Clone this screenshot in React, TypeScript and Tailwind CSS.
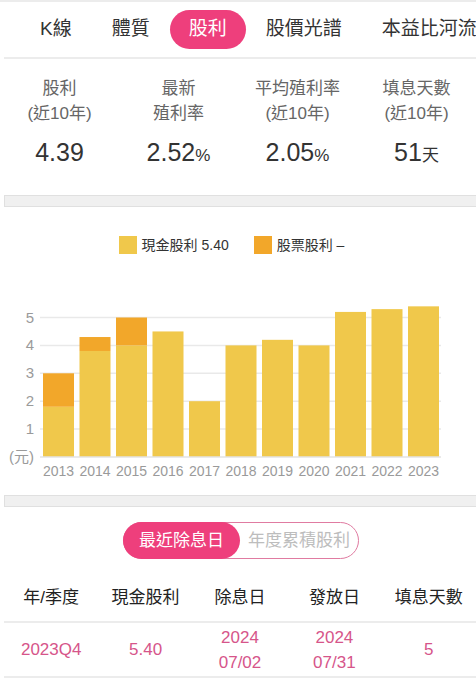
import React from 'react';

const FONT = '"Liberation Sans", "Noto Sans CJK TC", sans-serif';

const tabs = ['K線', '體質', '股利', '股價光譜', '本益比河流'];

const stats = [
    { l1: '股利', l2: '(近10年)', v: '4.39', u: '' },
    { l1: '最新', l2: '殖利率', v: '2.52', u: '%' },
    { l1: '平均殖利率', l2: '(近10年)', v: '2.05', u: '%' },
    { l1: '填息天數', l2: '(近10年)', v: '51', u: '天' },
];

const bars = [
    { year: '2013', cash: 1.8, stock: 1.2 },
    { year: '2014', cash: 3.8, stock: 0.5 },
    { year: '2015', cash: 4.0, stock: 1.0 },
    { year: '2016', cash: 4.5, stock: 0 },
    { year: '2017', cash: 2.0, stock: 0 },
    { year: '2018', cash: 4.0, stock: 0 },
    { year: '2019', cash: 4.2, stock: 0 },
    { year: '2020', cash: 4.0, stock: 0 },
    { year: '2021', cash: 5.2, stock: 0 },
    { year: '2022', cash: 5.3, stock: 0 },
    { year: '2023', cash: 5.4, stock: 0 },
];

const BASE = 457;
const UNIT = 27.9;

function Band() {
    return <div className="ml-[4px] h-[12px] bg-[#f0f0f0] border border-r-0 border-[#e0e0e0]" />;
}

function Chart() {
    return (
        <svg width={476} height={241} viewBox="0 254 476 241" className="block">
            {[1, 2, 3, 4, 5].map((v) => (
                <g key={v}>
                    <line x1={40} x2={441} y1={BASE - v * UNIT} y2={BASE - v * UNIT} stroke="#e9e9e9" strokeWidth={1.5} />
                    <text x={34} y={BASE - v * UNIT + 5} textAnchor="end" fontSize={15} fill="#9a9a9a" fontFamily={FONT}>{v}</text>
                </g>
            ))}
            <text x={34} y={BASE + 5} textAnchor="end" fontSize={15} fill="#9a9a9a" fontFamily={FONT}>(元)</text>
            {bars.map((b, i) => {
                const x = 43 + i * 36.5;
                const cashTop = BASE - b.cash * UNIT;
                const stockTop = cashTop - b.stock * UNIT;
                return (
                    <g key={b.year}>
                        <rect x={x} y={cashTop} width={31} height={b.cash * UNIT} fill="#f0c84b" />
                        {b.stock > 0 && <rect x={x} y={stockTop} width={31} height={b.stock * UNIT} fill="#f2a72a" />}
                        <text x={x + 15.5} y={BASE + 19} textAnchor="middle" fontSize={14} fill="#9a9a9a" fontFamily={FONT}>{b.year}</text>
                    </g>
                );
            })}
            <line x1={40} x2={441} y1={BASE} y2={BASE} stroke="#e3e3e3" strokeWidth={1.5} />
        </svg>
    );
}

export default function App() {
    return (
        <div className="w-[476px] h-[679px] overflow-hidden bg-white" style={{ fontFamily: FONT }}>
            <div className="border-t-2 border-[#ececec]" />

            {/* Tabs */}
            <div className="h-[55px] flex items-center pl-[40px] whitespace-nowrap text-[19px] text-[#333]">
                {tabs.map((t) => (
                    <div
                        key={t}
                        className={t === '股利'
                            ? 'h-[39px] px-[19px] rounded-full bg-[#ee3f7c] text-white flex items-center'
                            : 'h-[39px] px-[20px] first:pl-0 flex items-center'}
                    >
                        {t}
                    </div>
                ))}
            </div>
            <div className="ml-[4px] border-t-2 border-[#ececec]" />

            {/* Stats */}
            <div className="h-[136px] grid grid-cols-4 pt-[17px]">
                {stats.map((s) => (
                    <div key={s.l1} className="flex flex-col items-center">
                        <span className="text-[17px] leading-[25px] text-[#666]">{s.l1}</span>
                        <span className="text-[17px] leading-[25px] text-[#666]">{s.l2}</span>
                        <span className="mt-[11px] text-[25px] leading-[30px] text-[#333]">
                            {s.v}
                            {s.u && <span className="text-[17px]">{s.u}</span>}
                        </span>
                    </div>
                ))}
            </div>

            <Band />

            {/* Chart */}
            <div className="h-[288px] flex flex-col">
                <div className="pt-[29px] pr-[13px] flex justify-center items-center gap-[25px] text-[14px] text-[#333] leading-[18px]">
                    <div className="flex items-center gap-[5px]">
                        <span className="w-[18px] h-[18px] bg-[#f0c84b]" />
                        <span>現金股利 5.40</span>
                    </div>
                    <div className="flex items-center gap-[5px]">
                        <span className="w-[18px] h-[18px] bg-[#f2a72a]" />
                        <span>股票股利 –</span>
                    </div>
                </div>
                <Chart />
            </div>

            <Band />

            {/* Toggle */}
            <div className="pt-[15px] flex justify-center">
                <div className="ml-[6px] w-[236px] h-[37px] rounded-full border border-[#e07ba1] flex items-center text-[17px]">
                    <div className="w-[117px] h-[37px] -ml-px rounded-full bg-[#ee3f7c] text-white flex items-center justify-center">最近除息日</div>
                    <div className="flex-1 text-center text-[#bdbdbd]">年度累積股利</div>
                </div>
            </div>

            {/* Table */}
            <div className="mt-[16px] h-[48px] grid grid-cols-5 items-center text-[17px] text-[#222] border-b-2 border-[#ececec] ml-[4px]">
                {['年/季度', '現金股利', '除息日', '發放日', '填息天數'].map((h) => (
                    <div key={h} className="text-center">{h}</div>
                ))}
            </div>
            <div className="h-[55px] grid grid-cols-5 items-center text-[17px] leading-[25px] text-[#d6558a] border-b-2 border-[#ececec] ml-[4px]">
                <div className="text-center">2023Q4</div>
                <div className="text-center">5.40</div>
                <div className="text-center flex flex-col"><span>2024</span><span>07/02</span></div>
                <div className="text-center flex flex-col"><span>2024</span><span>07/31</span></div>
                <div className="text-center">5</div>
            </div>
        </div>
    );
}
